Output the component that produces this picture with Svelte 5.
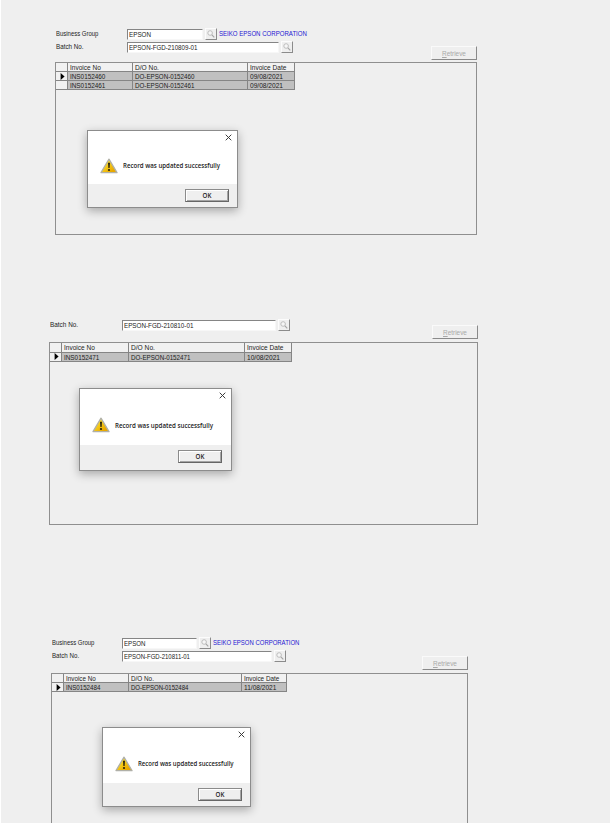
<script>
  const panels = [
    {
      size: { h: 300, top: 28, head: 34, left: 55, w: 422, frame: 173, label: 72, indent: 1, gap: 2, rowh: 9 },
      fields: [
        { label: 'Business Group', lw: 42.5, value: 'EPSON', vw: 22, box: 76, note: 'SEIKO EPSON CORPORATION', nw: 88 },
        { label: 'Batch No.', lw: 27.5, value: 'EPSON-FGD-210809-01', vw: 68, box: 152 }
      ],
      cols: [12, 65, 115, 47],
      heads: [['Invoice No', 31], ['D/O No.', 24], ['Invoice Date', 36]],
      rows: [
        [['INS0152460', 35], ['DO-EPSON-0152460', 59], ['09/08/2021', 33]],
        [['INS0152461', 35], ['DO-EPSON-0152461', 59], ['09/08/2021', 33]]
      ],
      dialog: { x: 87, y: 130, w: 151, h: 78, foot: 23, icon: 12, text: 97, ok: 8 }
    },
    {
      size: { h: 319, top: 19, head: 23, left: 49, w: 429, frame: 183, label: 73, indent: 1, gap: 3, rowh: 9.5 },
      fields: [{ label: 'Batch No.', lw: 28, value: 'EPSON-FGD-210810-01', vw: 69, box: 154 }],
      cols: [12, 67, 116, 47],
      heads: [['Invoice No', 31], ['D/O No.', 24], ['Invoice Date', 36]],
      rows: [[['INS0152471', 35], ['DO-EPSON-0152471', 59], ['10/08/2021', 33]]],
      dialog: { x: 79, y: 88, w: 153, h: 83, foot: 25, icon: 12, text: 98, ok: 9 }
    },
    {
      size: { h: 204, top: 18, head: 36, left: 51, w: 417, frame: 160, label: 71, indent: 1, gap: 3, rowh: 9 },
      fields: [
        { label: 'Business Group', lw: 42.5, value: 'EPSON', vw: 21.5, box: 75, note: 'SEIKO EPSON CORPORATION', nw: 86.5 },
        { label: 'Batch No.', lw: 27, value: 'EPSON-FGD-210811-01', vw: 66, box: 150 }
      ],
      cols: [12, 65, 113, 45],
      heads: [['Invoice No', 30], ['D/O No.', 23], ['Invoice Date', 35]],
      rows: [[['INS0152484', 34], ['DO-EPSON-0152484', 57], ['11/08/2021', 32]]],
      dialog: { x: 102, y: 108, w: 149, h: 80, foot: 23, icon: 12, text: 95.5, ok: 8 }
    }
  ];

  function fit(node, width) {
    const natural = node.offsetWidth;
    if (natural) node.style.transform = `scaleX(${width / natural})`;
  }

  const vars = (o) => Object.entries(o).map(([k, v]) => `--${k}:${v}px`).join(';');
</script>

{#snippet lens()}
  <span class="lookup">
    <svg viewBox="0 0 12 12" width="12" height="12">
      <circle cx="5.1" cy="5" r="2.3" fill="#f6f6f6" stroke="#b0b0b0" stroke-width=".8" />
      <path d="M6.9 6.9L9.3 9.3" stroke="#a5a5a5" stroke-width="1.2" />
    </svg>
  </span>
{/snippet}

<main>
  {#each panels as p}
    <section style={vars(p.size)}>
      <header>
        <div class="form">
          {#each p.fields as f}
            <div class="field">
              <div class="label"><span class="t" use:fit={f.lw}>{f.label}</span></div>
              <div class="input" style:width="{f.box}px"><span class="t" use:fit={f.vw}>{f.value}</span></div>
              {@render lens()}
              {#if f.note}<div class="note"><span class="t" use:fit={f.nw}>{f.note}</span></div>{/if}
            </div>
          {/each}
        </div>
        <div class="retrieve"><span class="t mid" use:fit={24}><u>R</u>etrieve</span></div>
      </header>
      <div class="frame">
        <div class="grid" style:grid-template-columns={p.cols.map((c) => c + 'px').join(' ')}>
          <div class="cell head"></div>
          {#each p.heads as [text, w]}
            <div class="cell head"><span class="t" use:fit={w}>{text}</span></div>
          {/each}
          {#each p.rows as row, i}
            <div class="cell mark">
              {#if i === 0}<svg width="5" height="7" viewBox="0 0 5 7"><path d="M.6 0L4.6 3.5L.6 7z" /></svg>{/if}
            </div>
            {#each row as [text, w]}
              <div class="cell"><span class="t" use:fit={w}>{text}</span></div>
            {/each}
          {/each}
        </div>
      </div>
      <div class="dialog" style={vars(p.dialog)}>
        <svg class="close" width="7" height="7" viewBox="0 0 7 7"><path d="M.7 .7L6.3 6.3M6.3 .7L.7 6.3" stroke="#333" stroke-width=".95" /></svg>
        <div class="body">
          <svg width="18" height="16" viewBox="0 0 18 16">
            <defs>
              <linearGradient id="amber" x1="0" y1="0" x2="1" y2="1">
                <stop offset=".2" stop-color="#ffe42a" />
                <stop offset=".8" stop-color="#e9a800" />
              </linearGradient>
            </defs>
            <path d="M9 1.2L17 14.6H1z" fill="url(#amber)" stroke="#b0b0a8" stroke-width="1.3" stroke-linejoin="round" />
            <path d="M8 4.8h2l-.4 5.2h-1.2z" fill="#29230c" />
            <circle cx="9" cy="12" r="1.1" fill="#29230c" />
          </svg>
          <div class="message"><span class="t" use:fit={p.dialog.text}>Record was updated successfully</span></div>
        </div>
        <div class="foot"><div class="ok">OK</div></div>
      </div>
    </section>
  {/each}
</main>

<style>
  :global(body) { margin: 0; background: #efefef; overflow: hidden; }
  main {
    box-sizing: border-box;
    width: 610px;
    height: 823px;
    overflow: hidden;
    background: #efefef;
    box-shadow: inset 1px 0 #fff;
    font: 8px/9px "Liberation Sans", Arial, sans-serif;
    color: #1c1c1c;
  }
  section {
    position: relative;
    box-sizing: border-box;
    height: var(--h);
    padding: var(--top) 0 0 var(--left);
  }
  .t { display: inline-block; white-space: nowrap; transform-origin: 0 50%; }
  .mid { transform-origin: 50% 50%; }
  header {
    display: flex;
    justify-content: space-between;
    align-items: flex-end;
    width: var(--w);
    height: var(--head);
  }
  .form { align-self: flex-start; display: flex; flex-direction: column; gap: 1px; }
  .field { display: flex; align-items: center; height: 12px; }
  .label { box-sizing: border-box; width: var(--label); padding: 0 0 2px var(--indent); }
  .input {
    box-sizing: border-box;
    height: 11px;
    padding-left: .5px;
    background: #fff;
    border: 1px solid;
    border-color: #858585 #f7f7f7 #f7f7f7 #858585;
    overflow: hidden;
  }
  .input .t { vertical-align: top; }
  .input, .label { white-space: nowrap; }
  .lookup {
    box-sizing: border-box;
    width: 12px;
    height: 12px;
    margin-left: 2px;
    border: 1px solid;
    border-color: #fcfcfc #8b8b8b #8b8b8b #fcfcfc;
  }
  .lookup svg { display: block; margin: -1px; }
  .note { width: 90px; margin-left: 2px; color: #1d16d2; margin-top: -1px; white-space: nowrap; }
  .retrieve {
    box-sizing: border-box;
    flex: none;
    width: 46px;
    height: 14px;
    margin-bottom: var(--gap);
    padding-top: 1px;
    border: 1px solid;
    border-color: #fafafa #8a8a8a #8a8a8a #fafafa;
    text-align: center;
    line-height: 11px;
    font-size: 7.5px;
    color: #a9a9a9;
  }
  .retrieve u { text-decoration-thickness: .6px; text-underline-offset: 1px; }
  .frame {
    box-sizing: border-box;
    width: var(--w);
    height: var(--frame);
    border: 1px solid #8f8f8f;
  }
  .grid { display: grid; width: max-content; grid-auto-rows: var(--rowh); }
  .cell {
    box-sizing: border-box;
    padding-left: 1.5px;
    line-height: 9px;
    background: #c0c0c0;
    border-right: 1px solid #858585;
    border-bottom: 1px solid #858585;
    white-space: nowrap;
  }
  .cell .t { vertical-align: top; }
  .head, .mark { background: #f1f1f1; }
  .mark { display: flex; align-items: center; padding-left: 4px; }
  .dialog {
    position: absolute;
    left: var(--x);
    top: var(--y);
    box-sizing: border-box;
    width: var(--w);
    height: var(--h);
    display: flex;
    flex-direction: column;
    background: #fff;
    border: 1px solid #8c8c8c;
    box-shadow: 0 3px 9px rgba(0, 0, 0, .3);
    font: 600 6.2px/9px "Open Sans", "Noto Sans", sans-serif;
    color: #1c1c1c;
  }
  .close { flex: none; align-self: flex-end; margin: 3px 5px 0 0; }
  .body {
    flex: 1;
    display: flex;
    align-items: center;
    padding: 6px 0 0 calc(var(--icon) - .5px);
    gap: 5.5px;
  }
  .body > svg { flex: none; }
  .message { width: var(--text); white-space: nowrap; }
  .foot {
    box-sizing: border-box;
    flex: none;
    height: var(--foot);
    padding: 5px var(--ok) 0 0;
    display: flex;
    justify-content: flex-end;
    background: #efefef;
  }
  .ok {
    box-sizing: border-box;
    width: 44px;
    height: 13px;
    border: 1px solid;
    border-color: #8b8b8b #666 #666 #8b8b8b;
    box-shadow: inset 1px 1px #fff, inset -1px -1px #a5a5a5;
    line-height: 11px;
    text-align: center;
  }
</style>
